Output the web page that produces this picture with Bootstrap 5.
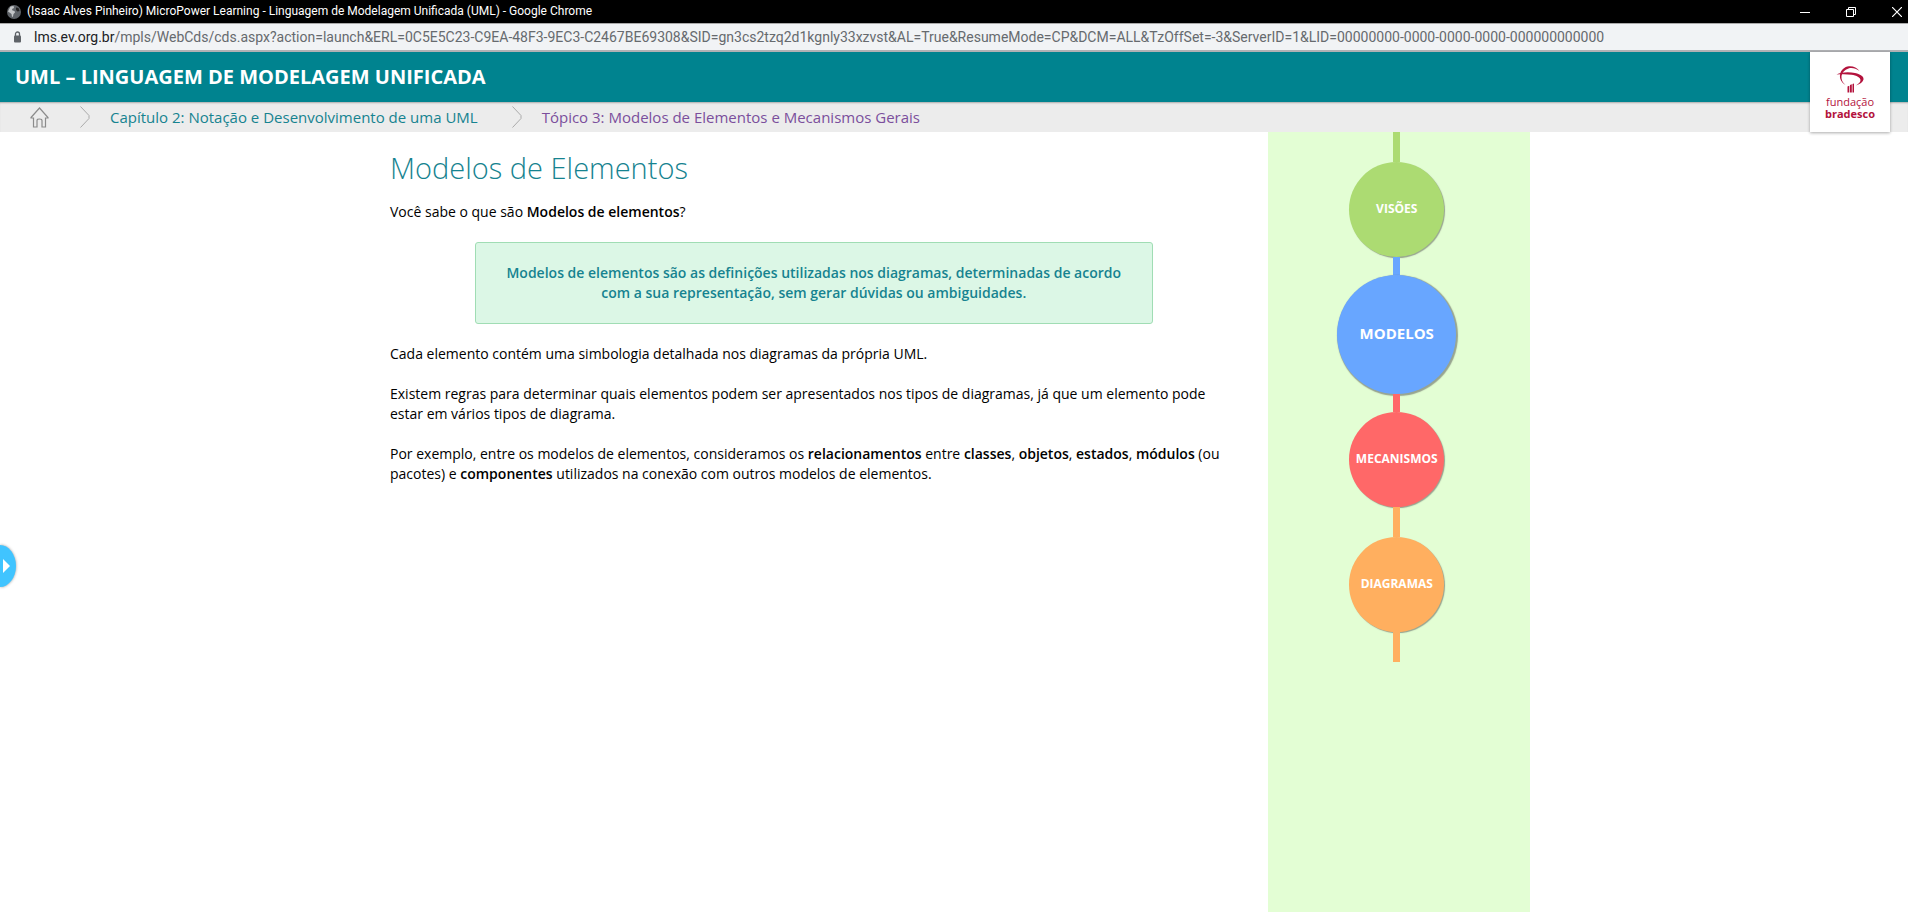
<!DOCTYPE html>
<html lang="pt-br">
<head>
<meta charset="utf-8">
<meta name="viewport" content="width=device-width, initial-scale=1">
<title>UML – Linguagem de Modelagem Unificada</title>
<link href="https://cdn.jsdelivr.net/npm/bootstrap@5.3.0/dist/css/bootstrap.min.css" rel="stylesheet">
<style>
body{font-family:"Open Sans",sans-serif;font-size:14px;line-height:20px;color:#000;background:#fff;overflow-x:hidden}
a{text-decoration:none}
.window-title{height:23px;background:#000;color:#fff;font-size:12px;line-height:23px;padding-left:7px;font-family:Roboto,sans-serif}
.window-title .caption-text{margin-left:2px}
.window-btn{width:46px;height:20px;padding:0;border:0;background:none;color:#fff;display:flex;align-items:center;justify-content:center}
.window-btn:last-child{width:22px;margin-left:12px}
.address{height:29px;border:0;border-top:1px solid #a9a9a9;border-bottom:2px solid #b0b1b4;background:#f1f3f5;padding-left:13px;font-family:Roboto,sans-serif;font-size:14px;color:#666a6e}
.address b{font-weight:400;color:#202124}
.course-bar{height:50px;background:#00838f;padding-left:15px}
.course-bar h1{font-size:20px;line-height:24px;font-weight:700;color:#fff}
.crumbs{height:30px;background:#ececec;box-shadow:inset 0 2px 2px -1px #aaa;font-size:15px;padding-left:30px}
.crumbs a{color:#168390}
.crumbs a.visited{color:#7b4f9c}
.crumbs .home{margin-right:31px}
.crumbs .sep{margin-right:20px}
.crumbs .gap-before{margin-left:34px}
.logo-card{position:absolute;top:0;right:18px;width:80px;height:80px;background:#fff;box-shadow:0 1px 3px #0005;color:#b3123c;font-family:"Open Sans",sans-serif;font-size:11px;line-height:12px;padding-top:14px;z-index:2}
.logo-card svg{display:block;margin:0 auto 2px}
.page-area{padding-left:12px}
.page-area .container{max-width:1170px;--bs-gutter-x:30px}
.page-area .row{--bs-gutter-x:30px}
.page-area h2{font-size:29px;line-height:36px;font-weight:300;color:#168390;margin:18px 0 16px}
.page-area p{margin:0 0 20px}
.page-area strong{font-weight:600}
.callout-box{width:80%;margin:0 auto 20px;padding:20px 25px;border:1px solid #a0ddb4;border-radius:3px;background:#dcf7e6;color:#168390;font-weight:600;text-align:center}
.path-panel{background:#e3fed4;padding-right:4px;height:100%}
.stem{width:7px;height:30px}
.stem-short{height:18px}
.node{width:95px;height:95px;border-radius:50%;color:#fff;font-size:12px;font-weight:700;padding-bottom:2px;box-shadow:1px 1px 1px #5558}
.node:hover{color:#fff}
.node-current{width:119px;height:119px;font-size:15px;padding-bottom:4px;box-shadow:1px 1px 1px 1px #5558}
.c-green{background:#acdb72}.c-blue{background:#68a6ff}.c-red{background:#ff6868}.c-orange{background:#ffaf5f}
.drawer-handle{position:absolute;left:0;top:413px;width:16px;height:42px;padding:0;border:0;border-radius:0 16px 16px 0/0 21px 21px 0;background:#40c4ff;box-shadow:0 0 3px #0006;display:flex;align-items:center}
</style>
</head>
<body class="d-flex flex-column min-vh-100">
<div class="window-title d-flex align-items-center">
  <svg width="14" height="14" viewBox="0 0 14 14" class="me-1" aria-hidden="true"><circle cx="7" cy="7" r="7" fill="#5f6368"/><path d="M3.500 1.500l3-.5.5 2-2 1 .5 1.500L7.500 6 8 7.500 6.500 9 6 11.500 5 12 4.500 9 2.500 7.500 1 6.500z" fill="#c4c6c8"/><path d="M9 2.500l2.500.5L12.500 6l-2 .5L9 5z" fill="#222"/></svg>
  <span class="caption-text">(Isaac Alves Pinheiro) MicroPower Learning - Linguagem de Modelagem Unificada (UML) - Google Chrome</span>
  <div class="d-flex ms-auto">
    <button class="window-btn" type="button" aria-label="Minimizar"><svg width="10" height="10" stroke="currentColor"><path d="M0 5.500h10"/></svg></button>
    <button class="window-btn" type="button" aria-label="Restaurar"><svg width="10" height="10" fill="none" stroke="currentColor"><path d="M.5 2.500h7v7h-7zM2.500 2.500v-2h7v7h-2"/></svg></button>
    <button class="window-btn" type="button" aria-label="Fechar"><svg width="10" height="10" stroke="currentColor" stroke-width="1.200"><path d="M0 0l10 10M10 0L0 10"/></svg></button>
  </div>
</div>
<div class="address d-flex align-items-center">
  <svg width="9" height="12" viewBox="0 0 9 12" class="me-2" aria-hidden="true"><path d="M2.500 5V3a2 2 0 014 0v2" fill="none" stroke="#5f6368" stroke-width="1.300"/><rect x="1" y="4.500" width="7" height="7" rx="1" fill="#5f6368"/></svg>
  <span class="ms-1 text-nowrap"><b>lms.ev.org.br</b>/mpls/WebCds/cds.aspx?action=launch&amp;ERL=0C5E5C23-C9EA-48F3-9EC3-C2467BE69308&amp;SID=gn3cs2tzq2d1kgnly33xzvst&amp;AL=True&amp;ResumeMode=CP&amp;DCM=ALL&amp;TzOffSet=-3&amp;ServerID=1&amp;LID=00000000-0000-0000-0000-000000000000</span>
</div>
<header class="position-relative">
  <div class="course-bar d-flex align-items-center"><h1 class="m-0">UML – LINGUAGEM DE MODELAGEM UNIFICADA</h1></div>
  <nav class="crumbs d-flex align-items-center" aria-label="Navegação">
    <a href="#" class="home d-flex" aria-label="Início"><svg width="19" height="21" viewBox="0 0 19 21" fill="none" stroke="#8b8b8b" stroke-width="1.200"><path d="M1 10.500L9.500 1 18 10.500V11h-2.500v9H12v-6.500q0-1.500-2.500-1.500T7 13.500V20H3.500v-9H1z"/></svg></a>
    <svg class="sep" width="10" height="22" fill="none" stroke="#aaa" aria-hidden="true"><path d="M.5.500L9 9.500v3L.5 21.500"/></svg>
    <a href="#">Capítulo 2: Notação e Desenvolvimento de uma UML</a>
    <svg class="sep gap-before" width="10" height="22" fill="none" stroke="#aaa" aria-hidden="true"><path d="M.5.500L9 9.500v3L.5 21.500"/></svg>
    <a href="#" class="visited">Tópico 3: Modelos de Elementos e Mecanismos Gerais</a>
  </nav>
  <div class="logo-card text-center">
    <svg width="28" height="28" viewBox="0 0 28 28" aria-hidden="true"><g fill="#b3123c"><path d="M.5 8.500C5 6 13 5.500 19 7c6 1.500 9 3.500 8.500 6.500C27 16 24 18 20 19.500c3-2 4.500-3.500 4.500-5.500 0-2.500-4-4.500-9-5.300C11 8 6 8 .5 8.500z"/><path d="M9.500 19C5.500 16.500 3.500 13 4 9 4.500 4 8.500.8 13 .3 17.500 0 21 2 23.500 5 20 2.500 16 1.500 12.500 2.500 8.500 3.700 6 6.500 5.500 10c-.4 3.500 1 6.500 4 9z"/><path d="M11.500 20.500l1.800-.8V26.500h-1.800zM14 19l1.800-.8v8.300H14zM16.500 18l1.500-.5v9h-1.500z"/></g></svg>
    <div>fundação</div><div class="fw-bold">bradesco</div>
  </div>
</header>
<main class="page-area position-relative flex-grow-1 d-flex">
  <button class="drawer-handle" type="button" aria-label="Abrir menu"><svg width="10" height="14"><path d="M3 0l7 7-7 7z" fill="#fff"/></svg></button>
  <div class="container">
    <div class="row h-100">
      <article class="col-9">
        <h2>Modelos de Elementos</h2>
        <p>Você sabe o que são <strong>Modelos de elementos</strong>?</p>
        <div class="callout-box">Modelos de elementos são as definições utilizadas nos diagramas, determinadas de acordo com a sua representação, sem gerar dúvidas ou ambiguidades.</div>
        <p>Cada elemento contém uma simbologia detalhada nos diagramas da própria UML.</p>
        <p>Existem regras para determinar quais elementos podem ser apresentados nos tipos de diagramas, já que um elemento pode estar em vários tipos de diagrama.</p>
        <p>Por exemplo, entre os modelos de elementos, consideramos os <strong>relacionamentos</strong> entre <strong>classes</strong>, <strong>objetos</strong>, <strong>estados</strong>, <strong>módulos</strong> (ou pacotes) e <strong>componentes</strong> utilizados na conexão com outros modelos de elementos.</p>
      </article>
      <aside class="col-3">
        <div class="path-panel d-flex flex-column align-items-center">
          <div class="stem c-green"></div>
          <a href="#" class="node c-green d-flex align-items-center justify-content-center">VISÕES</a>
          <div class="stem stem-short c-blue"></div>
          <a href="#" class="node node-current c-blue d-flex align-items-center justify-content-center">MODELOS</a>
          <div class="stem stem-short c-red"></div>
          <a href="#" class="node c-red d-flex align-items-center justify-content-center">MECANISMOS</a>
          <div class="stem c-orange"></div>
          <a href="#" class="node c-orange d-flex align-items-center justify-content-center">DIAGRAMAS</a>
          <div class="stem c-orange"></div>
        </div>
      </aside>
    </div>
  </div>
</main>
<script src="https://cdn.jsdelivr.net/npm/bootstrap@5.3.0/dist/js/bootstrap.bundle.min.js"></script>
</body>
</html>
